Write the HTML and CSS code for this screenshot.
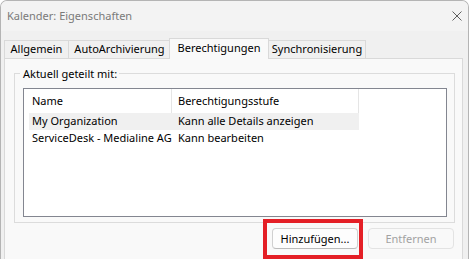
FILE: index.html
```html
<!DOCTYPE html>
<html lang="de">
<head>
<meta charset="utf-8">
<title>Kalender: Eigenschaften</title>
<link rel="stylesheet" href="styles.css">
</head>
<body>
<div class="window">
  <div class="titlebar">
    <span class="title">Kalender: Eigenschaften</span>
    <svg class="close" width="10" height="10" viewBox="0 0 10 10"><path d="M0.5 0.5 L9.5 9.5 M9.5 0.5 L0.5 9.5" stroke="#5f5f5f" stroke-width="1" fill="none"/></svg>
  </div>
  <div class="content">
    <div class="tabs">
      <div class="tab t1">Allgemein</div>
      <div class="tab t2">AutoArchivierung</div>
      <div class="tab t3 selected">Berechtigungen</div>
      <div class="tab t4">Synchronisierung</div>
    </div>
    <div class="panel">
      <fieldset class="group">
        <legend class="legend">Aktuell geteilt mit:</legend>
        <div class="list">
          <div class="row header">
            <div class="cell c1">Name</div>
            <div class="cell c2">Berechtigungsstufe</div>
          </div>
          <div class="row item hl">
            <div class="cell c1">My Organization</div>
            <div class="cell c2">Kann alle Details anzeigen</div>
          </div>
          <div class="row item">
            <div class="cell c1">ServiceDesk - Medialine AG</div>
            <div class="cell c2">Kann bearbeiten</div>
          </div>
        </div>
      </fieldset>
      <div class="buttons">
        <div class="marked">
          <button class="btn">Hinzufügen...</button>
          <span class="redbox"></span>
        </div>
        <button class="btn disabled" disabled>Entfernen</button>
      </div>
    </div>
  </div>
</div>
</body>
</html>
```
FILE: styles.css
```css
html, body {
  margin: 0;
  padding: 0;
  background: #ffffff;
  overflow: hidden;
  height: 259px;
}
body {
  font-family: "Noto Sans", "Open Sans", sans-serif;
  font-size: 11px;
  color: #000;
}
.window {
  box-sizing: border-box;
  width: 469px;
  height: 259px;
  border: 1px solid #b4b4b4;
  border-bottom: none;
  border-radius: 7px 7px 0 0;
  background: #f0f0f0;
  overflow: hidden;
  display: flex;
  flex-direction: column;
}
.titlebar {
  flex: none;
  height: 30px;
  background: #f3f3f3;
  display: flex;
  align-items: center;
  justify-content: space-between;
  padding: 0 6px 0 6px;
}
.title {
  color: #7a7a7a;
  font-size: 11px;
  line-height: 14px;
  margin-top: -1px;
}
.close {
  display: block;
  margin-top: -1px;
}
.content {
  flex: 1;
  min-height: 0;
  display: flex;
  flex-direction: column;
  padding: 7px 5px 0 3px;
}
.tabs {
  flex: none;
  display: flex;
  align-items: flex-end;
  height: 20px;
  position: relative;
  z-index: 1;
}
.tab {
  box-sizing: border-box;
  height: 18px;
  border: 1px solid #d9d9d9;
  border-bottom: none;
  background: #f0f0f0;
  text-align: center;
  line-height: 16px;
  white-space: nowrap;
}
.t1 { width: 65px; }
.t2 { width: 103px; margin-left: -1px; }
.t3 { width: 100px; margin-left: -2px; }
.t4 { width: 98px; margin-left: -1px; }
.tab.selected {
  height: 21px;
  margin-bottom: -1px;
  background: #f9f9f9;
  line-height: 17px;
  position: relative;
  z-index: 2;
}
.panel {
  flex: 1;
  min-height: 0;
  box-sizing: border-box;
  width: 459px;
  border: 1px solid #d9d9d9;
  border-bottom: none;
  background: #f9f9f9;
}
.group {
  box-sizing: border-box;
  width: 441px;
  margin: 7px 0 0 9px;
  padding: 7px 7px 5px 8px;
  border: 1px solid #dcdcdc;
  min-width: 0;
}
.legend {
  padding: 0 2px 0 3px;
  margin-left: -3px;
  line-height: 15px;
}
.list {
  box-sizing: border-box;
  height: 129px;
  border: 1px solid #838690;
  background: #ffffff;
  padding-left: 5px;
}
.row {
  display: flex;
  white-space: nowrap;
}
.header {
  height: 24px;
  align-items: center;
}
.header .cell {
  height: 24px;
  line-height: 23px;
  border-right: 1px solid #e5e5e5;
}
.item {
  height: 17px;
  line-height: 16px;
}
.hl .cell {
  background: #f0f0f0;
}
.cell {
  box-sizing: border-box;
}
.c1 {
  width: 143px;
  padding-left: 3px;
}
.c2 {
  width: 187px;
  padding-left: 6px;
}
.buttons {
  display: flex;
  justify-content: flex-end;
  gap: 10px;
  margin-top: 5px;
  padding-right: 8px;
}
.marked {
  position: relative;
}
.btn {
  display: block;
  box-sizing: border-box;
  width: 86px;
  height: 21px;
  padding: 0;
  margin: 0;
  font-family: "Noto Sans", "Open Sans", sans-serif;
  font-size: 11px;
  color: #000;
  background: #fdfdfd;
  border: 1px solid #d0d0d0;
  border-bottom-color: #bcbcbc;
  border-radius: 4px;
  line-height: 18px;
}
.btn.disabled {
  color: #a2a2a2;
  background: #f9f9f9;
  border-color: #e3e3e3;
}
.redbox {
  position: absolute;
  top: -9px;
  left: -9px;
  right: -5px;
  bottom: -10px;
  border: 4px solid #e41f26;
  pointer-events: none;
}
```
